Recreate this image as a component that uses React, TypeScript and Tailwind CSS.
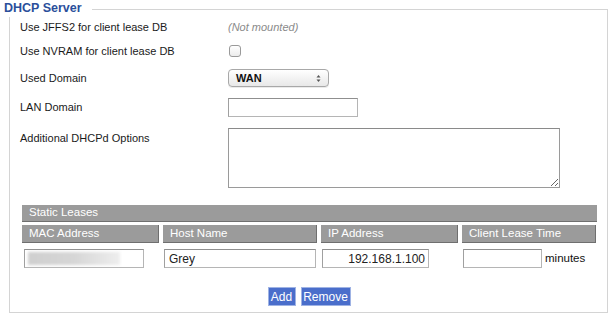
import React from "react";

const inputCls =
  "h-[19px] border border-[#b5b5b5] border-t-[#8f8f8f] border-l-[#a0a0a0] bg-white text-[11px] text-[#222] px-[4px] flex items-center";

export default function App() {
  return (
    <div
      className="w-[616px] h-[318px] bg-white relative text-[11px] text-[#1a1a1a] overflow-hidden"
      style={{ fontFamily: '"Liberation Sans", Arial, sans-serif' }}
    >
      <div className="pt-[9px] pl-[9px] pr-[8px]">
        <div className="border border-[#d4d4d4] h-[304px] pl-[10px] pr-[10px] pt-[7px]">
          {/* Row 1 */}
          <div className="flex items-center h-[20px]">
            <div className="w-[208px]">Use JFFS2 for client lease DB</div>
            <div className="italic text-[#8a8a8a]">(Not mounted)</div>
          </div>
          {/* Row 2 */}
          <div className="flex items-center h-[20px] mt-[4px]">
            <div className="w-[208px]">Use NVRAM for client lease DB</div>
            <div className="ml-[1px] w-[12px] h-[12px] rounded-[3px] border border-[#9a9a9a] bg-gradient-to-b from-white to-[#ececec]" />
          </div>
          {/* Row 3 */}
          <div className="flex items-center h-[20px] mt-[7px]">
            <div className="w-[208px]">Used Domain</div>
            <div className="relative w-[101px] h-[18px] rounded-[4px] border border-[#a8a8a8] bg-gradient-to-b from-white to-[#e8e8e8] flex items-center pl-[7px] font-bold text-[11px] text-[#111] shadow-[0_1px_0_rgba(0,0,0,0.08)]">
              WAN
              <svg className="absolute right-[7px] top-[4px]" width="5" height="9" viewBox="0 0 5 9">
                <path d="M0.5 3.5 L2.5 1 L4.5 3.5 Z" fill="#555" />
                <path d="M0.5 5.5 L2.5 8 L4.5 5.5 Z" fill="#555" />
              </svg>
            </div>
          </div>
          {/* Row 4 */}
          <div className="flex items-center h-[19px] mt-[10px]">
            <div className="w-[208px]">LAN Domain</div>
            <div className={inputCls + " w-[130px]"} />
          </div>
          {/* Row 5 */}
          <div className="flex items-start mt-[11px]">
            <div className="w-[208px] pt-[2px]">Additional DHCPd Options</div>
            <textarea
              className="w-[332px] h-[60px] border border-[#9a9a9a] border-t-[#8a8a8a] bg-white resize outline-none"
              defaultValue=""
            />
          </div>

          {/* Static leases */}
          <div className="mt-[17px] ml-[2px] w-[575px]">
            <div className="h-[17px] bg-[#9b9b9b] border-b border-[#6f6f6f] text-white text-[11.5px] pl-[7px] flex items-center">
              Static Leases
            </div>
            <div className="grid grid-cols-[137px_154px_137px_134px] gap-x-[4px] mt-[3px]">
              {["MAC Address", "Host Name", "IP Address", "Client Lease Time"].map((h) => (
                <div
                  key={h}
                  className="h-[18px] bg-[#9b9b9b] border-r border-b border-[#6f6f6f] text-white text-[11.5px] pl-[7px] flex items-center"
                >
                  {h}
                </div>
              ))}
            </div>
            <div className="grid grid-cols-[137px_154px_137px_134px] gap-x-[4px] mt-[6px]">
              <div className="pl-[2px]">
                <div className={inputCls + " w-[120px] pl-[3px]"}>
                  <div className="h-[13px] w-[92px] blur-[1.5px] bg-gradient-to-r from-[#cfcfcf] via-[#d6d6d6] to-[#eeeeee]" />
                </div>
              </div>
              <div className="pl-[1px]">
                <div className={inputCls + " w-[152px] text-[12px] text-[#111]"}>Grey</div>
              </div>
              <div className="pl-[1px]">
                <div className={inputCls + " w-[107px] justify-end text-[12px] text-[#111] pr-[3px]"}>192.168.1.100</div>
              </div>
              <div className="pl-[1px] flex items-center">
                <div className={inputCls + " w-[79px]"} />
                <span className="ml-[3px] text-[11.5px] text-[#111]">minutes</span>
              </div>
            </div>
          </div>

          {/* Buttons */}
          <div className="flex justify-center gap-[5px] mt-[19px] pl-[1px]">
            <button className="h-[19px] w-[28px] bg-[#4a6ecb] border border-[#9fb3e4] text-white text-[12px] leading-none">
              Add
            </button>
            <button className="h-[19px] w-[50px] bg-[#4a6ecb] border border-[#9fb3e4] text-white text-[12px] leading-none">
              Remove
            </button>
          </div>
        </div>
      </div>

      {/* Legend overlapping the border */}
      <div className="absolute left-0 top-0 w-[92px] h-[17px] bg-white pl-[4px] pt-[1px] font-bold text-[12.5px] text-[#2b4f9b] leading-[15px]">
        DHCP Server
      </div>
    </div>
  );
}
